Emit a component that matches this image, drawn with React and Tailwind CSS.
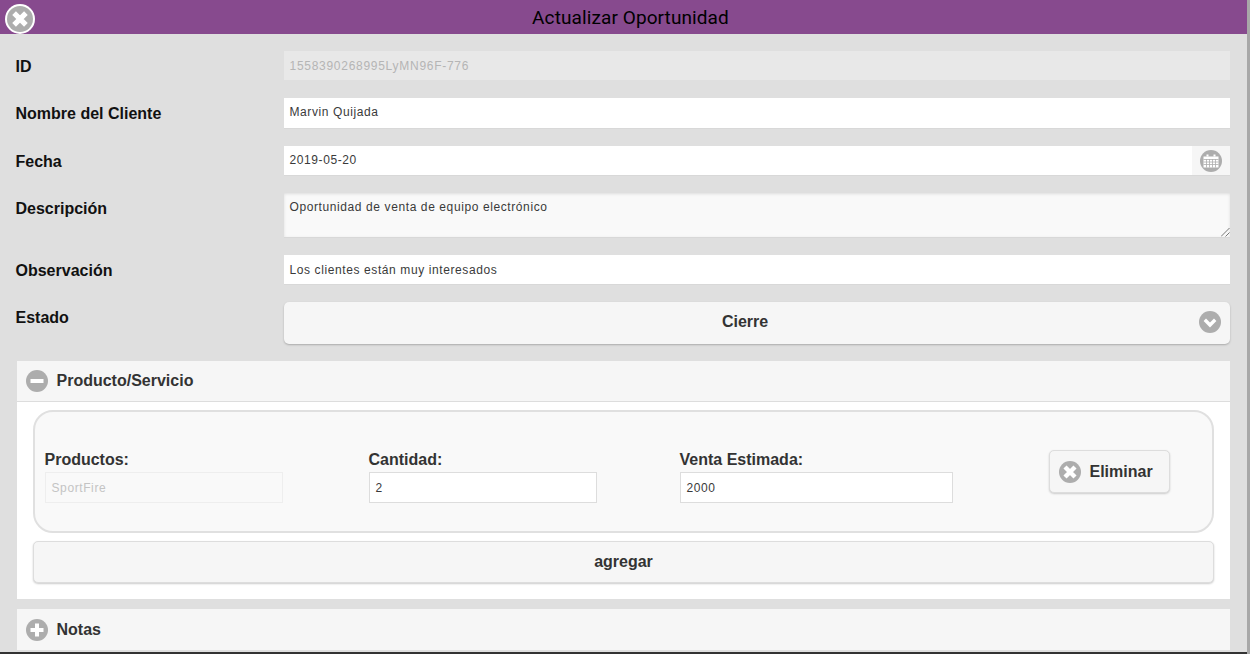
import React from "react";

const Circle = ({ children, className = "" }) => (
  <svg viewBox="0 0 22 22" className={className}>
    <circle cx="11" cy="11" r="11" fill="#adadad" />
    {children}
  </svg>
);

const CloseIcon = ({ className }) => (
  <Circle className={className}>
    <path d="M6 6 16 16M16 6 6 16" stroke="#fff" strokeWidth="4.4" fill="none" />
  </Circle>
);

const Row = ({ label, children, className = "" }) => (
  <div className={`flex items-start ${className}`}>
    <label className="w-[269px] shrink-0 pl-[0.5px] pt-[6px] text-[16px] leading-[20px] font-bold text-[#111]">{label}</label>
    <div className="w-[946px]">{children}</div>
  </div>
);

const fieldText = "text-[12px] tracking-[0.6px] text-[#3a3a3a]";

const Field = ({ value, disabled, h = "h-[29px]" }) => (
  <div className={`${h} flex items-center pl-[5.5px] ${fieldText} ${disabled ? "bg-[#e8e8e8] !text-[#b5b5b5] !tracking-[0.72px]" : "bg-white shadow-[0_1px_0_#d8d8d8]"}`}>
    {value}
  </div>
);

const MiniField = ({ label, value, width, muted }) => (
  <div className="shrink-0">
    <div className="-ml-[0.5px] text-[16px] leading-[20px] font-bold text-[#333] mb-[2px]">{label}</div>
    <div style={{ width }} className={`h-[31px] flex items-center pl-[5.5px] border ${fieldText} ${muted ? "border-[#eeeeee] bg-[#f9f9f9] !text-[#c4c4c4]" : "border-[#dddddd] bg-white"}`}>
      {value}
    </div>
  </div>
);

export default function App() {
  return (
    <div className="flex h-[654px] w-[1250px] overflow-hidden bg-[#dfdfdf] font-['Liberation_Sans',sans-serif]">
      <div className="w-[1247px] shrink-0 relative">
        <header className="h-[34px] bg-[#874a8e] flex items-center justify-center text-[19px] tracking-[0.1px] font-['Roboto',sans-serif] text-black pl-[14px] pt-[2px]">
          Actualizar Oportunidad
        </header>
        <span className="absolute left-[5px] top-[4px] w-[30px] h-[30px] rounded-full bg-white p-[2px]">
          <CloseIcon className="w-[26px] h-[26px]" />
        </span>

        <div className="pl-[15px] pt-[17px]">
          <Row label="ID" className="mb-[18px]"><Field value="1558390268995LyMN96F-776" disabled /></Row>
          <Row label="Nombre del Cliente" className="mb-[18px]">
            <div className={`h-[30px] flex items-center pl-[5.5px] pb-[2px] bg-white shadow-[0_1px_0_#d8d8d8] ${fieldText}`}>Marvin Quijada</div>
          </Row>
          <Row label="Fecha" className="mb-[18px]">
            <div className="flex h-[29px] shadow-[0_1px_0_#d8d8d8]">
              <div className={`flex-1 bg-white flex items-center pl-[5.5px] pb-[2px] ${fieldText}`}>2019-05-20</div>
              <div className="w-[38px] bg-[#f6f6f6] flex items-center justify-center">
                <svg viewBox="0 0 22 22" className="w-[22px] h-[22px]">
                  <circle cx="11" cy="11" r="11" fill="#adadad" />
                  <path d="M3.5 6.5h15v11h-15z" fill="#fff" />
                  <path d="M6.5 4.5h2v2h-2zM13.5 4.5h2v2h-2z" fill="#fff" />
                  <path d="M3.5 9.5h15M3.5 12h15M3.5 14.5h15M6.5 9v8.5M9.5 9v8.5M12.5 9v8.5M15.5 9v8.5" stroke="#adadad" strokeWidth="0.8" />
                </svg>
              </div>
            </div>
          </Row>
          <Row label="Descripción" className="mb-[18px]">
            <div className={`relative h-[44px] bg-[#f9f9f9] pl-[5.5px] pt-[7px] leading-[14px] shadow-[inset_0_1px_3px_#dddddd,0_1px_0_#d8d8d8] ${fieldText}`}>
              Oportunidad de venta de equipo electrónico
              <svg viewBox="0 0 9 9" className="absolute right-0 bottom-0 w-[9px] h-[9px]">
                <path d="M0 8.5 8.5 0M4.5 8.5 8.5 4.5" stroke="#555" strokeWidth="0.8" />
              </svg>
            </div>
          </Row>
          <Row label="Observación" className="mb-[18px]"><Field value="Los clientes están muy interesados" /></Row>
          <Row label="Estado" className="mb-[17px]">
            <div className="relative h-[42px] rounded-[5px] bg-[#f6f6f6] shadow-[0_1px_2px_#aaaaaa] flex items-center justify-center text-[16px] font-bold text-[#333] pr-[24px] pb-[2px]">
              Cierre
              <svg viewBox="0 0 22 22" className="absolute right-[9px] top-[9px] w-[22px] h-[22px]">
                <circle cx="11" cy="11" r="11" fill="#adadad" />
                <path d="M5.8 8.8 11 14 16.2 8.8" stroke="#fff" strokeWidth="3.4" fill="none" />
              </svg>
            </div>
          </Row>
        </div>

        <section className="ml-[17px] w-[1213px] mb-[10px] bg-white">
          <div className="h-[41px] bg-[#f6f6f6] border-b border-[#dddddd] flex items-center pl-[9px] gap-[8.5px] text-[16px] font-bold text-[#333]">
            <Circle className="w-[22px] h-[22px]"><path d="M4.5 9h13v4h-13z" fill="#fff" /></Circle>
            Producto/Servicio
          </div>
          <div className="px-[16px] pt-[8px] pb-[16px]">
            <div className="h-[123px] rounded-[20px] border-2 border-[#e0e0e0] bg-[#f9f9f9] flex items-start pl-[10px] pt-[38px]">
              <div className="w-[324px] shrink-0"><MiniField label="Productos:" value="SportFire" width="238px" muted /></div>
              <div className="w-[311px] shrink-0"><MiniField label="Cantidad:" value="2" width="228px" /></div>
              <MiniField label="Venta Estimada:" value="2000" width="273px" />
              <button className="ml-[96px] w-[121px] h-[43px] rounded-[5px] border border-[#dddddd] bg-[#f6f6f6] shadow-[0_1px_2px_#cccccc] flex items-center pl-[9px] gap-[8.5px] text-[16px] font-bold text-[#333]">
                <CloseIcon className="w-[22px] h-[22px]" />
                Eliminar
              </button>
            </div>
            <button className="mt-[8px] block w-full h-[42px] rounded-[5px] border border-[#dddddd] bg-[#f6f6f6] shadow-[0_1px_2px_#cccccc] text-[16px] font-bold text-[#333]">
              agregar
            </button>
          </div>
        </section>

        <section className="ml-[17px] w-[1213px] h-[41px] bg-[#f6f6f6] flex items-center pl-[9px] gap-[8.5px] text-[16px] font-bold text-[#333]">
          <Circle className="w-[22px] h-[22px]"><path d="M9 4.5h4V9h4.5v4H13v4.5H9V13H4.5V9H9z" fill="#fff" /></Circle>
          Notas
        </section>
        <div className="absolute left-0 right-0 bottom-0 h-[2px] bg-[#333333]" />
      </div>
      <div className="w-[3px] bg-[#a8a8a8]" />
    </div>
  );
}
